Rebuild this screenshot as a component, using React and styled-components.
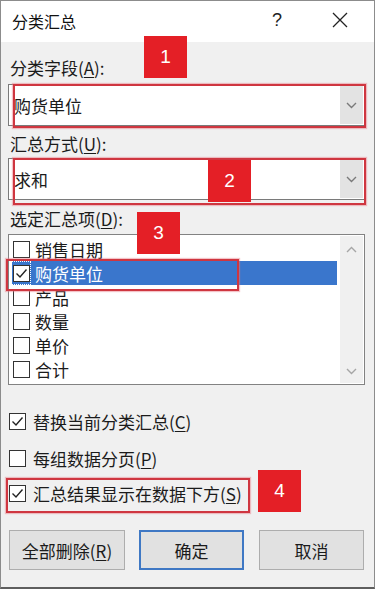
import React from 'react';
import styled, { createGlobalStyle } from 'styled-components';

const Global = createGlobalStyle`
  html, body { margin: 0; padding: 0; background: #ffffff; }
  body { font-family: "Noto Sans CJK SC", "Microsoft YaHei", sans-serif; }
  * { box-sizing: border-box; }
`;

const Window = styled.div`
  position: relative;
  width: 375px;
  height: 589px;
  border: 1px solid #8c8c8c;
  border-bottom: 2px solid #5e5e5e;
  background: #f0f0f0;
  display: flex;
  flex-direction: column;
  font-size: 17px;
  color: #1b1b1b;
`;

const TitleBar = styled.div`
  height: 41px;
  background: #ffffff;
  display: flex;
  align-items: center;
  padding: 0 4px 0 11px;
  flex-shrink: 0;
`;

const Title = styled.div`
  flex: 1;
  font-size: 16px;
  color: #111;
  line-height: 20px;
  padding-bottom: 2px;
`;

const TitleButton = styled.div`
  width: 60px;
  height: 40px;
  display: flex;
  align-items: center;
  justify-content: center;
  margin-left: ${p => p.$gap || 0}px;
  font-family: "Liberation Sans", Arial, sans-serif;
  font-size: 18px;
  color: #222;
  padding-bottom: 3px;
`;

const Body = styled.div`
  flex: 1;
  display: flex;
  flex-direction: column;
  padding: 16px 9px 0 7px;
`;

const Label = styled.div`
  height: 20px;
  line-height: 20px;
  margin-top: ${p => p.$mt || 0}px;
  padding-left: 2px;
  white-space: nowrap;
`;

const Key = styled.u`
  text-underline-offset: 2px;
`;

const Combo = styled.div`
  margin-top: ${p => p.$mt || 0}px;
  height: 42px;
  border: 1px solid #7a7a7a;
  background: #ffffff;
  display: flex;
  align-items: stretch;
`;

const ComboText = styled.div`
  flex: 1;
  display: flex;
  align-items: center;
  padding-left: 5px;
`;

const DropButton = styled.div`
  width: 23px;
  margin: 1px;
  background: #e3e3e3;
  display: flex;
  align-items: center;
  justify-content: center;
`;

const ListBox = styled.div`
  margin-top: 5px;
  height: 151px;
  border: 1px solid #828282;
  background: #ffffff;
  display: flex;
  padding: 2px 1px 2px 3px;
`;

const Items = styled.div`
  width: 325px;
  display: flex;
  flex-direction: column;
`;

const Item = styled.div`
  height: 24px;
  display: flex;
  align-items: center;
  gap: 4px;
  background: ${p => (p.$selected ? '#3a76cc' : 'transparent')};
  color: ${p => (p.$selected ? '#ffffff' : '#1b1b1b')};
  white-space: nowrap;
`;

const FocusWrap = styled.div`
  height: 24px;
  width: 20px;
  display: flex;
  align-items: center;
  justify-content: center;
  outline: ${p => (p.$focus ? '1px dotted #ffffff' : 'none')};
  outline-offset: -1px;
  margin-left: -1px;
`;

const Box = styled.div`
  width: 17px;
  height: 17px;
  border: 1px solid #333333;
  background: #ffffff;
  display: flex;
  align-items: center;
  justify-content: center;
  flex-shrink: 0;
`;

const ScrollBar = styled.div`
  margin-left: 3px;
  width: 23px;
  margin-top: -1px;
  margin-bottom: -1px;
  background: #f0f0f0;
  display: flex;
  flex-direction: column;
  justify-content: space-between;
  align-items: center;
  padding: 10px 0 8px;
`;

const CheckRow = styled.div`
  margin-top: ${p => p.$mt || 0}px;
  height: 20px;
  display: flex;
  align-items: center;
  gap: 7px;
  padding-left: 1px;
  white-space: nowrap;
`;

const ButtonRow = styled.div`
  margin-top: 27px;
  display: flex;
  align-items: center;
  padding-left: 1px;
`;

const Button = styled.div`
  width: ${p => p.$w}px;
  height: 40px;
  margin-left: ${p => p.$ml || 0}px;
  background: #e1e1e1;
  border: ${p => (p.$default ? '2px solid #3f78c4' : '1px solid #adadad')};
  display: flex;
  align-items: center;
  justify-content: center;
  white-space: nowrap;
`;

const Badge = styled.div`
  position: absolute;
  left: ${p => p.$x}px;
  top: ${p => p.$y}px;
  width: 43px;
  height: 42px;
  background: #e41f26;
  color: #ffffff;
  font-family: "Liberation Sans", Arial, sans-serif;
  font-size: 19px;
  display: flex;
  align-items: center;
  justify-content: center;
`;

const Marker = styled.div`
  position: absolute;
  left: ${p => p.$x}px;
  top: ${p => p.$y}px;
  width: ${p => p.$w}px;
  height: ${p => p.$h}px;
  border: 2px solid #cf3640;
  box-shadow: 0 0 1px 1px rgba(230, 120, 130, 0.45);
  pointer-events: none;
`;

const Chevron = ({ up, color = '#7a7a7a', w = 11 }) => (
  <svg width={w} height="7" viewBox="0 0 11 7">
    <path
      d={up ? 'M1 6 L5.5 1.5 L10 6' : 'M1 1 L5.5 5.5 L10 1'}
      fill="none"
      stroke={color}
      strokeWidth="1.4"
    />
  </svg>
);

const Check = () => (
  <svg width="15" height="15" viewBox="0 0 15 15">
    <path d="M2.5 7.5 L6 11 L12.5 3.5" fill="none" stroke="#222" strokeWidth="1.4" />
  </svg>
);

const CheckBox = ({ checked }) => <Box>{checked ? <Check /> : null}</Box>;

const items = [
  { label: '销售日期', checked: false },
  { label: '购货单位', checked: true, selected: true },
  { label: '产品', checked: false },
  { label: '数量', checked: false },
  { label: '单价', checked: false },
  { label: '合计', checked: false },
];

export default function App() {
  return (
    <>
      <Global />
      <Window>
        <TitleBar>
          <Title>分类汇总</Title>
          <TitleButton>?</TitleButton>
          <TitleButton $gap={3}>
            <svg width="16" height="16" viewBox="0 0 16 16">
              <path d="M1 1 L15 15 M15 1 L1 15" stroke="#222" strokeWidth="1.3" />
            </svg>
          </TitleButton>
        </TitleBar>
        <Body>
          <Label>
            分类字段(<Key>A</Key>):
          </Label>
          <Combo $mt={6}>
            <ComboText>购货单位</ComboText>
            <DropButton>
              <Chevron />
            </DropButton>
          </Combo>
          <Label $mt={8}>
            汇总方式(<Key>U</Key>):
          </Label>
          <Combo $mt={4}>
            <ComboText>求和</ComboText>
            <DropButton>
              <Chevron />
            </DropButton>
          </Combo>
          <Label $mt={9}>
            选定汇总项(<Key>D</Key>):
          </Label>
          <ListBox>
            <Items>
              {items.map(it => (
                <Item key={it.label} $selected={it.selected}>
                  <FocusWrap $focus={it.selected}>
                    <CheckBox checked={it.checked} />
                  </FocusWrap>
                  {it.label}
                </Item>
              ))}
            </Items>
            <ScrollBar>
              <Chevron up color="#a6a6a6" />
              <Chevron color="#a6a6a6" />
            </ScrollBar>
          </ListBox>
          <CheckRow $mt={26}>
            <CheckBox checked />
            <span>
              替换当前分类汇总(<Key>C</Key>)
            </span>
          </CheckRow>
          <CheckRow $mt={17}>
            <CheckBox />
            <span>
              每组数据分页(<Key>P</Key>)
            </span>
          </CheckRow>
          <CheckRow $mt={15}>
            <CheckBox checked />
            <span>
              汇总结果显示在数据下方(<Key>S</Key>)
            </span>
          </CheckRow>
          <ButtonRow>
            <Button $w={116}>
              全部删除(<Key>R</Key>)
            </Button>
            <Button $w={105} $ml={14} $default>
              确定
            </Button>
            <Button $w={105} $ml={15}>
              取消
            </Button>
          </ButtonRow>
        </Body>

        <Marker $x={12} $y={83} $w={353} $h={44} />
        <Marker $x={12} $y={157} $w={353} $h={47} />
        <Marker $x={5} $y={258} $w={233} $h={32} />
        <Marker $x={5} $y={477} $w={244} $h={35} />

        <Badge $x={143} $y={35}>1</Badge>
        <Badge $x={207} $y={159}>2</Badge>
        <Badge $x={136} $y={211}>3</Badge>
        <Badge $x={257} $y={469}>4</Badge>
      </Window>
    </>
  );
}
